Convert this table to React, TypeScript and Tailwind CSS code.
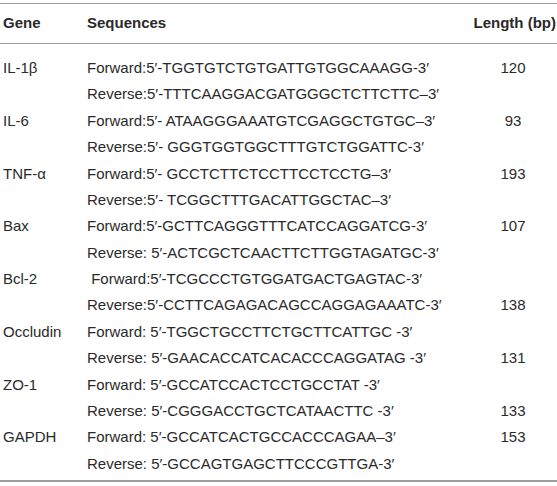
import React from "react";

type Row = { gene?: string; seq: string; len?: string };

const rows: Row[] = [
  { gene: "IL-1β", seq: "Forward:5′-TGGTGTCTGTGATTGTGGCAAAGG-3′", len: "120" },
  { seq: "Reverse:5′-TTTCAAGGACGATGGGCTCTTCTTC–3′" },
  { gene: "IL-6", seq: "Forward:5′- ATAAGGGAAATGTCGAGGCTGTGC–3′", len: "93" },
  { seq: "Reverse:5′- GGGTGGTGGCTTTGTCTGGATTC-3′" },
  { gene: "TNF-α", seq: "Forward:5′- GCCTCTTCTCCTTCCTCCTG–3′", len: "193" },
  { seq: "Reverse:5′- TCGGCTTTGACATTGGCTAC–3′" },
  { gene: "Bax", seq: "Forward:5′-GCTTCAGGGTTTCATCCAGGATCG-3′", len: "107" },
  { seq: "Reverse: 5′-ACTCGCTCAACTTCTTGGTAGATGC-3′" },
  { gene: "Bcl-2", seq: "\u00a0Forward:5′-TCGCCCTGTGGATGACTGAGTAC-3′" },
  { seq: "Reverse:5′-CCTTCAGAGACAGCCAGGAGAAATC-3′", len: "138" },
  { gene: "Occludin", seq: "Forward: 5′-TGGCTGCCTTCTGCTTCATTGC -3′" },
  { seq: "Reverse: 5′-GAACACCATCACACCCAGGATAG -3′", len: "131" },
  { gene: "ZO-1", seq: "Forward: 5′-GCCATCCACTCCTGCCTAT -3′" },
  { seq: "Reverse: 5′-CGGGACCTGCTCATAACTTC -3′", len: "133" },
  { gene: "GAPDH", seq: "Forward: 5′-GCCATCACTGCCACCCAGAA–3′", len: "153" },
  { seq: "Reverse: 5′-GCCAGTGAGCTTCCCGTTGA-3′" },
];

export default function App() {
  return (
    <div
      className="w-[557px] h-[486px] bg-white text-[#2a2a2a] pt-[3px]"
      style={{ fontFamily: '"Liberation Sans", Arial, sans-serif' }}
    >
      <div className="border-t border-b-2 border-[#9d9d9d]">
        <div className="grid grid-cols-[84px_1fr_auto] h-[40px] items-center border-b border-[#9d9d9d] text-[15px] font-bold pl-[3px] pr-[1px]">
          <div>Gene</div>
          <div>Sequences</div>
          <div>Length (bp)</div>
        </div>
        <div className="pt-[11px] pb-[3px]">
          {rows.map((r, i) => (
            <div
              key={i}
              className="grid grid-cols-[84px_1fr_86px] h-[26.4px] items-center text-[15px] pl-[3px] pr-[1px]"
            >
              <div>{r.gene ?? ""}</div>
              <div className="whitespace-pre">{r.seq}</div>
              <div className="text-center">{r.len ?? ""}</div>
            </div>
          ))}
        </div>
      </div>
    </div>
  );
}
